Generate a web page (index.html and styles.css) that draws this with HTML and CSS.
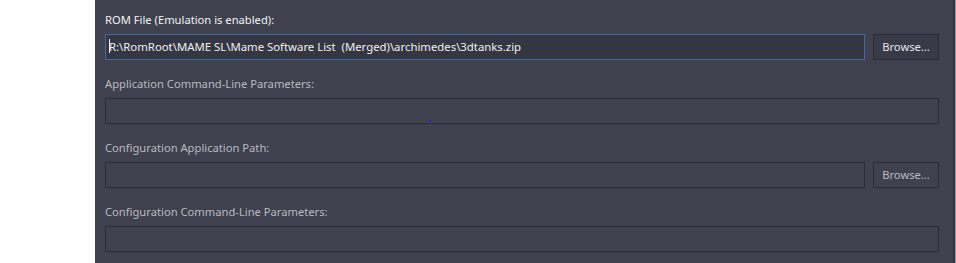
FILE: index.html
```html
<!DOCTYPE html>
<html lang="en">
<head>
  <meta charset="UTF-8" />
  <title>Emulator settings</title>
  <link rel="stylesheet" href="styles.css">
</head>
<body>
  <div class="panel">
    <div class="field">
      <div class="label active">ROM File (Emulation is enabled):</div>
      <div class="row">
        <div class="textbox focused"><span class="caret"></span>R:\RomRoot\MAME SL\Mame Software List&nbsp; (Merged)\archimedes\3dtanks.zip</div>
        <div class="button">Browse...</div>
      </div>
    </div>

    <div class="field">
      <div class="label">Application Command-Line Parameters:</div>
      <div class="row">
        <div class="textbox"></div>
      </div>
      <span class="dot"></span>
    </div>

    <div class="field">
      <div class="label">Configuration Application Path:</div>
      <div class="row">
        <div class="textbox"></div>
        <div class="button">Browse...</div>
      </div>
    </div>

    <div class="field">
      <div class="label">Configuration Command-Line Parameters:</div>
      <div class="row">
        <div class="textbox"></div>
      </div>
    </div>
  </div>
  <div class="edge"></div>
</body>
</html>
```

FILE: styles.css
```css
body {
  margin: 0;
  padding: 0;
  background-color: #ffffff;
  font-family: "Noto Sans", "Open Sans", sans-serif;
  font-size: 11.2px;
  display: flex;
  height: 263px;
  overflow: hidden;
}

.panel {
  margin-left: 95px;
  width: 844px;
  padding: 0 14px 0 10px;
  background-color: #3f414e;
  box-sizing: content-box;
}

.edge {
  width: 2px;
  background-color: #33343f;
  border-right: 1px solid #9a9ba3;
}

.field {
  position: relative;
  padding: 12px 0 4px;
}

.label {
  height: 16px;
  line-height: 16px;
  margin-bottom: 6px;
  color: #b9bac0;
}

.label.active {
  color: #f2f2f4;
}

.row {
  display: flex;
  gap: 8px;
}

.textbox {
  flex: 1;
  height: 24px;
  line-height: 24px;
  border: 1px solid #2a2b34;
  padding: 0 3px;
  color: #f0f0f0;
  font-size: 11.35px;
  white-space: nowrap;
  overflow: hidden;
}

.textbox.focused {
  background-color: #343642;
  border-color: #3d6aa6;
}

.caret {
  display: inline-block;
  width: 1px;
  height: 14px;
  margin-right: -1px;
  vertical-align: -2px;
  background-color: #f0f0f0;
}

.button {
  width: 64px;
  height: 24px;
  line-height: 24px;
  text-align: center;
  border: 1px solid #2a2b34;
  background-color: #383a47;
  color: #e6e6ea;
}

.field:nth-child(3) .button {
  background-color: #3f414e;
  color: #b9bac0;
}

.dot {
  position: absolute;
  left: 324px;
  top: 56px;
  width: 2px;
  height: 2px;
  background-color: #2020ff;
}
```
